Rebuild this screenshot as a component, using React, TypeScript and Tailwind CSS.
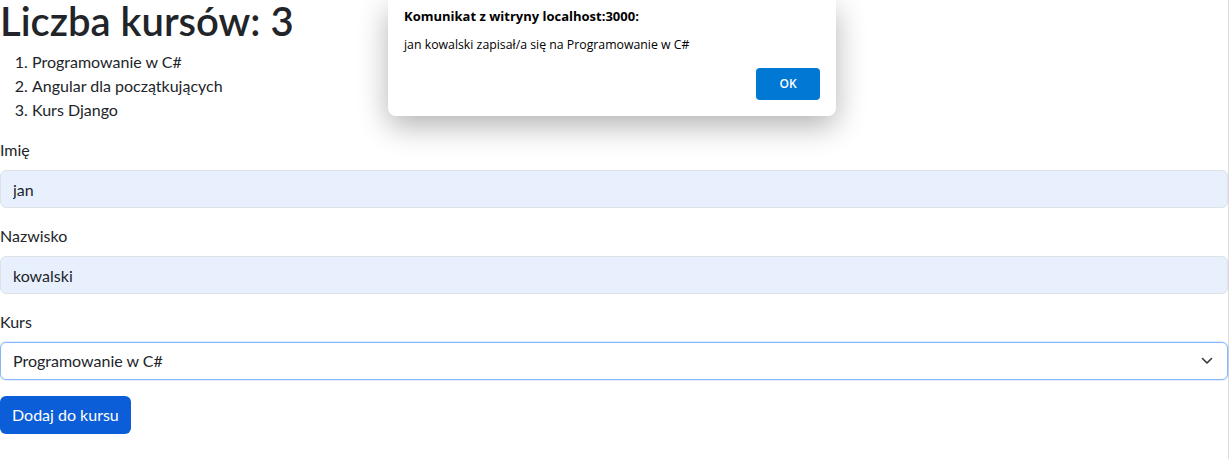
import { useState } from "react";

const courses = ["Programowanie w C#", "Angular dla początkujących", "Kurs Django"];

const Alert = ({ message }: { message: string }) => (
  <div className="absolute left-[388px] top-0 w-[448px] h-[116px] bg-white rounded-b-lg shadow-[0_10px_30px_rgba(0,0,0,0.3)] flex flex-col px-4 font-['Open_Sans',sans-serif] text-black">
    <div className="text-[13px] font-bold leading-4 mt-[8px]">Komunikat z witryny localhost:3000:</div>
    <div className="text-[12.3px] leading-4 mt-[13px]">{message}</div>
    <div className="flex justify-end mt-[15px]">
      <button className="w-16 h-8 rounded bg-[#0078d4] text-white text-[12px] font-semibold">OK</button>
    </div>
  </div>
);

export default function App() {
  const [imie, setImie] = useState("jan");
  const [nazwisko, setNazwisko] = useState("kowalski");
  const [kurs, setKurs] = useState(courses[0]);

  return (
    <div className="relative w-[1230px] h-[459px] overflow-hidden bg-white text-[#212529] font-['Lato',sans-serif]">
      <div className="w-[1229px] h-full border-r border-[#dcdcdc]">
        <h1 className="text-[40px] font-semibold leading-[38px] pt-[2px] mb-[10px]">Liczba kursów: {courses.length}</h1>
        <ol className="list-decimal pl-8 mb-4 text-base leading-6">
          {courses.map((c) => (
            <li key={c}>{c}</li>
          ))}
        </ol>
        <form onSubmit={(e) => e.preventDefault()}>
          <div className="mb-4">
            <label htmlFor="imie" className="block leading-6 mb-2">Imię</label>
            <input id="imie" value={imie} onChange={(e) => setImie(e.target.value)} className="block w-full h-[38px] px-3 rounded-md border border-[#dee2e6] bg-[#e8f0fe] text-base outline-none" />
          </div>
          <div className="mb-4">
            <label htmlFor="nazwisko" className="block leading-6 mb-2">Nazwisko</label>
            <input id="nazwisko" value={nazwisko} onChange={(e) => setNazwisko(e.target.value)} className="block w-full h-[38px] px-3 rounded-md border border-[#dee2e6] bg-[#e8f0fe] text-base outline-none" />
          </div>
          <div className="mb-4">
            <label htmlFor="kurs" className="block leading-6 mb-2">Kurs</label>
            <div className="relative">
              <select id="kurs" value={kurs} onChange={(e) => setKurs(e.target.value)} className="block w-full h-[38px] pl-3 pr-9 rounded-md border border-[#86b7fe] shadow-[0_0_0_1px_rgba(13,110,253,0.12)] bg-white text-base outline-none appearance-none">
                {courses.map((c) => (
                  <option key={c}>{c}</option>
                ))}
              </select>
              <svg className="absolute right-[15px] top-[15px] pointer-events-none" width="12" height="8" viewBox="0 0 12 8" fill="none">
                <path d="M1.5 1.5 6 6l4.5-4.5" stroke="#343a40" strokeWidth="1.6" strokeLinecap="round" strokeLinejoin="round" />
              </svg>
            </div>
          </div>
          <button type="submit" className="h-[38px] px-3 rounded-md bg-[#0b5ed7] text-white text-base">Dodaj do kursu</button>
        </form>
      </div>
      <Alert message={`${imie} ${nazwisko} zapisał/a się na ${kurs}`} />
    </div>
  );
}
